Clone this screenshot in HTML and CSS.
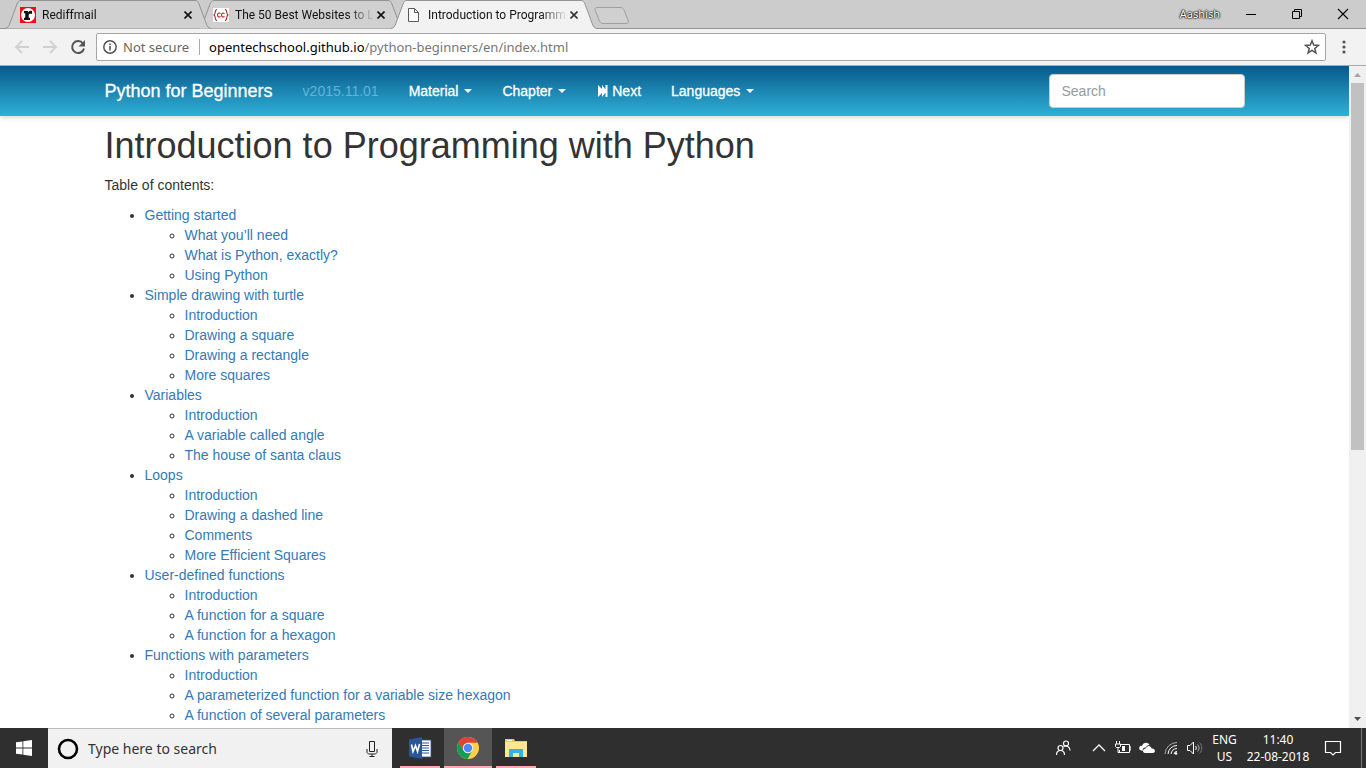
FILE: index.html
```html
<!DOCTYPE html>
<html lang="en">
<head>
<meta charset="utf-8">
<title>Introduction to Programming with Python</title>
<link rel="stylesheet" href="styles.css">
</head>
<body>
<div class="tabstrip">
  <div class="tabs">
    <div class="tab tab-first">
      <svg class="tab-shape" viewBox="0 0 206 29"><path d="M0 28.500C3 28 4 26 5 23L12 4C13 1.500 14 .5 16 .5H190C192 .5 193 1.500 194 4L201 23C202 26 203 28 206 28.500" fill="#d0d0d0" stroke="#939393"/></svg>
      <svg class="favicon" viewBox="0 0 16 16"><rect width="16" height="16" fill="#f00c18"/><circle cx="8" cy="8" r="7" fill="#fff"/><path d="M4 4h4v1.500C9 4 10 3.600 12 4v3c-2-.6-3.300-.2-3.300 1.500v2.300H10V13H4v-2.200h1.200V6.200H4z" fill="#111"/></svg>
      <span class="tab-title">Rediffmail</span>
      <button class="tab-close" aria-label="Close tab"><svg viewBox="0 0 8 8"><path d="M.5.5l7 7M7.500.5l-7 7" stroke="#111" stroke-width="1.600"/></svg></button>
    </div>
    <div class="tab">
      <svg class="tab-shape" viewBox="0 0 206 29"><path d="M0 28.500C3 28 4 26 5 23L12 4C13 1.500 14 .5 16 .5H190C192 .5 193 1.500 194 4L201 23C202 26 203 28 206 28.500" fill="#d0d0d0" stroke="#939393"/></svg>
      <svg class="favicon" viewBox="0 0 16 16"><rect y="1" width="16" height="14" fill="#fff"/><path d="M4 2.500C1.500 2.500 3 7 1 8c2 1 .5 5.500 3 5.500M12 2.500c2.500 0 1 4.500 3 5.500-2 1-.5 5.500-3 5.500M7.500 6.500c-1.500-1-3-.2-3 1.500s1.500 2.500 3 1.500M11.500 6.500c-1.500-1-3-.2-3 1.500s1.500 2.500 3 1.500" fill="none" stroke="#b4232a" stroke-width="1.100"/></svg>
      <span class="tab-title">The 50 Best Websites to L</span>
      <button class="tab-close" aria-label="Close tab"><svg viewBox="0 0 8 8"><path d="M.5.5l7 7M7.500.5l-7 7" stroke="#111" stroke-width="1.600"/></svg></button>
    </div>
    <div class="tab tab-active">
      <svg class="tab-shape" viewBox="0 0 206 29"><path d="M0 29V28.500C3 28 4 26 5 23L12 4C13 1.500 14 .5 16 .5H190C192 .5 193 1.500 194 4L201 23C202 26 203 28 206 28.500V29z" fill="#f2f2f2"/><path d="M0 28.500C3 28 4 26 5 23L12 4C13 1.500 14 .5 16 .5H190C192 .5 193 1.500 194 4L201 23C202 26 203 28 206 28.500" fill="none" stroke="#939393"/></svg>
      <svg class="favicon" viewBox="0 0 16 16"><path d="M2.500 1.500h6l4 4v9h-10zM8.500 1.500v4h4" fill="#fff" stroke="#5a5a5a"/></svg>
      <span class="tab-title">Introduction to Programm</span>
      <button class="tab-close" aria-label="Close tab"><svg viewBox="0 0 8 8"><path d="M.5.5l7 7M7.500.5l-7 7" stroke="#333" stroke-width="1.600"/></svg></button>
    </div>
    <button class="new-tab" aria-label="New tab"><svg viewBox="0 0 36 18"><path d="M4 .5H26C28 .5 29 1 30 3L34 13C35 16 34 16.500 32 16.500H9C7 16.500 6.500 16 5.500 14L1.500 4C.5 1.500 1 .5 4 .5z" fill="#d0d0d0" stroke="#a0a0a0"/></svg></button>
  </div>
  <div class="window-controls">
    <span class="profile">Aashish</span>
    <button aria-label="Minimize"><svg viewBox="0 0 12 12"><path d="M1 6.500h10" stroke="#000"/></svg></button>
    <button aria-label="Restore"><svg viewBox="0 0 12 12"><path d="M1.500 3.500h7v7h-7zM3.500 3.500v-2h7v7h-2" fill="none" stroke="#000"/></svg></button>
    <button aria-label="Close"><svg viewBox="0 0 12 12"><path d="M1 1l10 10M11 1L1 11" stroke="#000" stroke-width="1.100"/></svg></button>
  </div>
</div>
<div class="toolbar">
  <button class="nav-button" aria-label="Back"><svg viewBox="0 0 16 16"><path d="M15 8H2M8 2L2 8l6 6" fill="none" stroke="#d0d0d0" stroke-width="1.800"/></svg></button>
  <button class="nav-button" aria-label="Forward"><svg viewBox="0 0 16 16"><path d="M1 8h13M8 2l6 6-6 6" fill="none" stroke="#d0d0d0" stroke-width="1.800"/></svg></button>
  <button class="nav-button" aria-label="Reload"><svg viewBox="0 0 16 16"><path d="M13 4.500A6 6 0 1 0 14 9.500" fill="none" stroke="#555" stroke-width="2"/><path d="M15 1v6.500H8.500z" fill="#555"/></svg></button>
  <div class="address">
    <svg class="info-icon" viewBox="0 0 14 14"><circle cx="7" cy="7" r="6.200" fill="none" stroke="#555" stroke-width="1.500"/><path d="M7 6v4.500M7 3.500v1.600" stroke="#555" stroke-width="1.600"/></svg>
    <span class="security">Not secure</span>
    <span class="url"><span class="host">opentechschool.github.io</span>/python-beginners/en/index.html</span>
    <button class="star" aria-label="Bookmark this page"><svg viewBox="0 0 16 16"><path d="M8 1.800l1.700 4.300 4.600.3-3.500 3 1.100 4.500L8 11.400l-3.900 2.500 1.100-4.500-3.500-3 4.600-.3z" fill="none" stroke="#555" stroke-width="1.500"/></svg></button>
  </div>
  <button class="menu" aria-label="Menu"><svg viewBox="0 0 4 14"><circle cx="2" cy="2" r="1.600" fill="#555"/><circle cx="2" cy="7" r="1.600" fill="#555"/><circle cx="2" cy="12" r="1.600" fill="#555"/></svg></button>
</div>
<div class="viewport">
  <div class="page">
    <nav class="navbar">
      <div class="container navbar-inner">
        <a class="brand" href="#">Python for Beginners</a>
        <span class="version">v2015.11.01</span>
        <a class="nav-link" href="#">Material <b class="caret"></b></a>
        <a class="nav-link" href="#">Chapter <b class="caret"></b></a>
        <a class="nav-link" href="#"><svg class="step" viewBox="0 0 10 12"><path d="M0 0l4 4V0l3.500 4.500V0H9.500v12H7.500V7.500L4 12V8l-4 4z" fill="#fff"/></svg>Next</a>
        <a class="nav-link" href="#">Languages <b class="caret"></b></a>
        <input class="search" type="text" placeholder="Search" aria-label="Search">
      </div>
    </nav>
    <main class="container content">
      <h1>Introduction to Programming with Python</h1>
      <p>Table of contents:</p>
      <ul>
        <li><a href="#">Getting started</a>
          <ul><li><a href="#">What you’ll need</a></li><li><a href="#">What is Python, exactly?</a></li><li><a href="#">Using Python</a></li></ul></li>
        <li><a href="#">Simple drawing with turtle</a>
          <ul><li><a href="#">Introduction</a></li><li><a href="#">Drawing a square</a></li><li><a href="#">Drawing a rectangle</a></li><li><a href="#">More squares</a></li></ul></li>
        <li><a href="#">Variables</a>
          <ul><li><a href="#">Introduction</a></li><li><a href="#">A variable called angle</a></li><li><a href="#">The house of santa claus</a></li></ul></li>
        <li><a href="#">Loops</a>
          <ul><li><a href="#">Introduction</a></li><li><a href="#">Drawing a dashed line</a></li><li><a href="#">Comments</a></li><li><a href="#">More Efficient Squares</a></li></ul></li>
        <li><a href="#">User-defined functions</a>
          <ul><li><a href="#">Introduction</a></li><li><a href="#">A function for a square</a></li><li><a href="#">A function for a hexagon</a></li></ul></li>
        <li><a href="#">Functions with parameters</a>
          <ul><li><a href="#">Introduction</a></li><li><a href="#">A parameterized function for a variable size hexagon</a></li><li><a href="#">A function of several parameters</a></li></ul></li>
      </ul>
    </main>
  </div>
  <div class="scrollbar">
    <svg class="arrow" viewBox="0 0 17 17"><path d="M5 11l3.500-4 3.500 4z" fill="#a3a3a3"/></svg>
    <div class="track"><div class="thumb"></div></div>
    <svg class="arrow" viewBox="0 0 17 17"><path d="M5 6l3.500 4L12 6z" fill="#505050"/></svg>
  </div>
</div>
<div class="taskbar">
  <button class="start" aria-label="Start"><svg viewBox="0 0 16 16"><path d="M0 2.300l6.500-.9v6.100H0zM7.300 1.300L16 0v7.500H7.300zM0 8.400h6.500v6.200L0 13.700zM7.300 8.400H16V16l-8.700-1.300z" fill="#fff"/></svg></button>
  <div class="task-search">
    <svg class="cortana" viewBox="0 0 22 22"><circle cx="11" cy="11" r="9" fill="none" stroke="#000" stroke-width="2.600"/></svg>
    <input type="text" placeholder="Type here to search" aria-label="Type here to search">
    <svg class="mic" viewBox="0 0 12 16"><path d="M3.500.5h5v10h-5zM1 8v3.500l1.500 1.500h7L11 11.500V8M6 13v2.500M3.500 15.500h5" fill="none" stroke="#222"/></svg>
  </div>
  <div class="apps">
    <button class="app" aria-label="Word"><svg viewBox="0 0 24 24"><path d="M12 4h11v17H12z" fill="#fff" stroke="#2a5699" stroke-width=".8"/><path d="M14 7h7M14 9.500h7M14 12h7M14 14.500h7M14 17h7" stroke="#2a5699"/><path d="M1 3.500L14 1v22L1 20.500z" fill="#2a5699"/><path d="M3.500 8.500l1.500 7 2.500-6 2 6 2-7.500" fill="none" stroke="#fff" stroke-width="1.600"/></svg></button>
    <button class="app app-current" aria-label="Chrome"><svg viewBox="0 0 24 24"><circle cx="12" cy="12" r="11" fill="#fdd047"/><path d="M2.500 6.500A11 11 0 0 0 11.500 23l5-8.500L12 12l-4.500 2z" fill="#109d58"/><path d="M12 6.800h9.700A11 11 0 0 0 2.500 6.500l4.800 7.800z" fill="#db4437"/><circle cx="12" cy="12" r="5.200" fill="#f1f1f1"/><circle cx="12" cy="12" r="4.200" fill="#4c8bf5"/></svg></button>
    <button class="app" aria-label="File Explorer"><svg viewBox="0 0 24 24"><path d="M1 3h9l1 2h12v15H1z" fill="#f7c64e"/><path d="M3 4h5v1H3z" fill="#fff"/><path d="M1 6h22v15H1z" fill="#ffe694"/><path d="M5 13h14v8h-4v-4H9v4H5z" fill="#35b2e5"/></svg></button>
  </div>
  <div class="tray">
    <svg class="tray-icon people" viewBox="0 0 16 16"><g fill="none" stroke="#fff" stroke-width="1.200"><circle cx="5.500" cy="8" r="2.500"/><path d="M1.500 15c0-6 8-6 8 0"/><circle cx="11" cy="3.500" r="2.500"/><path d="M8.500 6.500c3-1.500 6.500 0 6.500 4"/></g></svg>
    <svg class="tray-icon" viewBox="0 0 16 16"><path d="M2 11l6-6 6 6" fill="none" stroke="#fff" stroke-width="1.300"/></svg>
    <svg class="tray-icon" viewBox="0 0 16 16"><path d="M6 4.500h8.500v8H4.500V10M14.500 7H16v3h-1.500" fill="none" stroke="#fff"/><path d="M7 6h3v5H7z" fill="#fff"/><path d="M1.500 1v3M4.500 1v3M.5 4h5v2.500l-1 1h-3l-1-1zM3 7.500v5h3" fill="none" stroke="#fff"/></svg>
    <svg class="tray-icon" viewBox="0 0 16 16"><path d="M1 10c-2-2 0-5 2-4C4 2 9 1.500 10.500 5 8 5 7 7 7 7.500 4.500 7 3 9 4 11z" fill="#fff"/><path d="M6 13c-3 0-2.500-4.500.8-4.500C8 5 12 5 12.500 8.500c4-.5 4.500 4.500 1.500 4.500z" fill="#fff"/></svg>
    <svg class="tray-icon" viewBox="0 0 16 16"><g fill="none" stroke="#fff"><path d="M2 14A12 12 0 0 1 14 2.500" stroke="#aaa"/><path d="M5 14A9 9 0 0 1 14 5.500M8 14a6 6 0 0 1 6-5.500M11 14a3 3 0 0 1 3-2.500"/></g><circle cx="13" cy="13.500" r="1.300" fill="#fff"/></svg>
    <svg class="tray-icon" viewBox="0 0 16 16"><g fill="none" stroke="#fff"><path d="M.5 5.500h2.500L6.500 2v12L3 10.500H.5z"/><path d="M8.500 6c1 1 1 3 0 4"/><path d="M10.500 4.500c2 2 2 5 0 7" stroke="#bbb"/><path d="M12.500 2.500c3 3 3 8 0 11" stroke="#777"/></g></svg>
    <div class="language">ENG<br>US</div>
    <div class="clock">11:40<br>22-08-2018</div>
    <svg class="notice" viewBox="0 0 18 18"><path d="M1.500 2.500h15v11h-5L9 16l-2.500-2.500h-5z" fill="none" stroke="#fff" stroke-width="1.200"/></svg>
    <div class="show-desktop"></div>
  </div>
</div>
</body>
</html>
```
FILE: styles.css
```css
* { box-sizing: border-box; }
body {
  margin: 0;
  height: 100vh;
  display: flex;
  flex-direction: column;
  overflow: hidden;
  background: #fff;
  color: #333;
  font: 14px/20px "Liberation Sans", Arial, sans-serif;
}
button { border: 0; padding: 0; background: none; display: flex; align-items: center; justify-content: center; }
svg { display: block; flex: none; }
a { color: #337ab7; text-decoration: none; }

.tabstrip, .toolbar, .taskbar { flex: none; font-family: "Noto Sans", "Open Sans", sans-serif; }

.tabstrip {
  height: 29px;
  display: flex;
  justify-content: space-between;
  background: #ccc;
  box-shadow: inset 0 -1px #939393;
}
.tabs { display: flex; padding-left: 5px; }
.tab {
  position: relative;
  z-index: 1;
  width: 206px;
  height: 29px;
  margin-right: -13px;
  padding: 0 15px;
  display: flex;
  align-items: center;
  color: #111;
  font-family: Roboto, "Open Sans", sans-serif;
  font-size: 12px;
}
.tab-first { z-index: 2; }
.tab-active { z-index: 3; }
.tab-shape { position: absolute; inset: 0; width: 206px; height: 29px; z-index: -1; }
.favicon { width: 16px; height: 16px; margin-right: 6px; }
.tab-title {
  flex: 1;
  white-space: nowrap;
  -webkit-mask-image: linear-gradient(to right, #000 112px, transparent 140px);
  mask-image: linear-gradient(to right, #000 112px, transparent 140px);
}
.tab-close { width: 16px; height: 16px; }
.tab-close svg { width: 8px; height: 8px; }
.new-tab { margin-left: 10px; height: 31px; }
.new-tab svg { width: 36px; height: 18px; }

.window-controls { display: flex; height: 27px; }
.window-controls button { width: 46px; }
.window-controls svg { width: 12px; height: 12px; }
.profile {
  padding: 4px 8px 0 0;
  color: #fff;
  font-size: 11px;
  line-height: 20px;
  text-shadow: 0 0 2px #000, 0 0 2px #000, 0 0 1px #000;
}

.toolbar {
  height: 37px;
  display: flex;
  align-items: center;
  padding: 0 20px 0 14px;
  background: #f2f2f2;
  border-bottom: 1px solid #a9a9a9;
}
.nav-button { width: 16px; height: 16px; margin-right: 12px; }
.nav-button svg { width: 16px; height: 16px; }
.address {
  flex: 1;
  height: 28px;
  margin-left: -2px;
  padding: 0 5px 0 6px;
  display: flex;
  align-items: center;
  background: #fff;
  border: 1px solid #a6a6a6;
  border-radius: 2px;
  font-size: 13px;
  color: #777;
}
.info-icon { width: 14px; height: 14px; margin-right: 6px; }
.security { padding-right: 10px; color: #666; border-right: 1px solid #aaa; line-height: 16px; }
.url { flex: 1; padding-left: 9px; }
.host { color: #000; }
.star svg { width: 16px; height: 16px; }
.menu { width: 4px; margin-left: 16px; }
.menu svg { width: 4px; height: 14px; }

.viewport { flex: 1; min-height: 0; display: flex; }
.page { flex: 1; min-width: 0; overflow: hidden; }
.container { max-width: 1170px; margin: 0 auto; padding: 0 15px; }
.navbar {
  background: linear-gradient(#085a8a, #30b0d8);
  box-shadow: 0 1px 5px rgba(0, 0, 0, .2);
}
.navbar-inner { display: flex; align-items: center; height: 50px; color: #fff; }
.brand, .nav-link { color: #fff; -webkit-text-stroke: 0.3px #fff; }
.brand { font-size: 18px; }
.version { margin: 0 15px 0 30px; color: #64b2d6; font-size: 14px; }
.nav-link { display: flex; align-items: center; padding: 15px; }
.caret { margin-left: 6px; border: 4px solid transparent; border-top-color: #fff; border-bottom: 0; }
.step { width: 10px; height: 12px; margin: 0 4px 0 2px; }
.search {
  width: 196px;
  height: 34px;
  margin-left: auto;
  padding: 6px 12px;
  border: 1px solid #ccc;
  border-radius: 4px;
  background: #fff;
  font: inherit;
}
.search::placeholder { color: #999; }

h1 { margin: 10px 0; font-size: 36px; line-height: 39px; font-weight: 400; }
p { margin: 0 0 10px; }
ul { margin: 0; padding-left: 40px; }

.scrollbar { width: 17px; display: flex; flex-direction: column; background: #f0f0f0; }
.arrow { width: 17px; height: 17px; }
.track { flex: 1; padding: 0 2px; }
.thumb { height: 58.5%; background: #c1c1c1; }

.taskbar { height: 40px; display: flex; background: #2f2f2f; color: #fff; }
.start { width: 48px; }
.start svg { width: 16px; height: 16px; }
.task-search {
  width: 344px;
  padding: 0 14px 0 9px;
  display: flex;
  align-items: center;
  background: #f1f1f1;
  border-top: 1px solid #bbb;
}
.cortana { width: 22px; height: 22px; margin-right: 9px; }
.task-search input { flex: 1; min-width: 0; border: 0; padding: 0; background: none; font: 14px/20px "Noto Sans", "Open Sans", sans-serif; }
.task-search input::placeholder { color: #333; }
.mic { width: 12px; height: 16px; }
.apps { display: flex; padding-left: 4px; }
.app { width: 40px; margin: 0 4px; box-shadow: inset 0 -2px #f7adad; }
.app svg { width: 24px; height: 24px; }
.app-current { width: 48px; margin: 0; background: #555; }
.tray { margin-left: auto; display: flex; align-items: center; font-size: 12px; line-height: 17px; text-align: center; }
.tray-icon { width: 16px; height: 16px; margin-right: 8px; }
.people { margin-right: 20px; }
.language { width: 27px; }
.clock { width: 66px; margin: 0 13px 0 7px; white-space: nowrap; }
.notice { width: 18px; height: 18px; margin-right: 19px; }
.show-desktop { width: 5px; height: 40px; border-left: 1px solid #777; }
```
